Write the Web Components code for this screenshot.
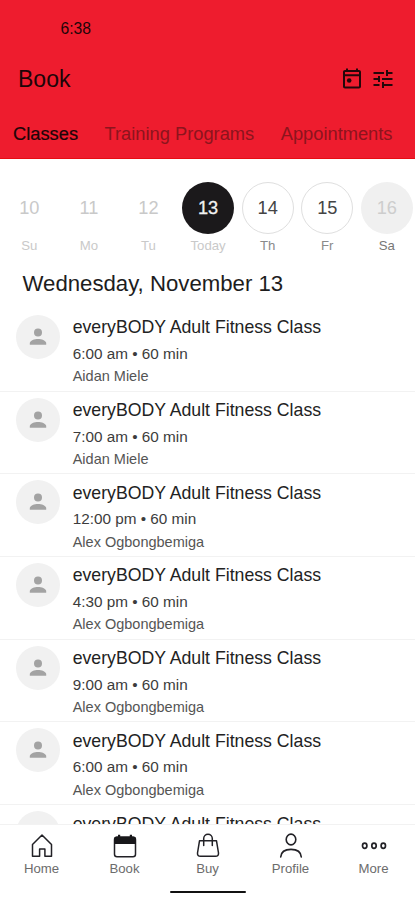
<!DOCTYPE html>
<html lang="en">
<head>
<meta charset="utf-8">
<meta name="viewport" content="width=device-width, initial-scale=1">
<title>Book</title>
<style>
html, body { margin: 0; height: 100%; overflow: hidden; background: #fff; }
body { font-family: "Liberation Sans", Arial, sans-serif; }
</style>
</head>
<body>
<booking-app></booking-app>
<script>
function define(name, template) {
  customElements.define(name, class extends HTMLElement {
    constructor() {
      super();
      this.attachShadow({ mode: 'open' });
    }
    connectedCallback() {
      this.shadowRoot.innerHTML = typeof template === 'function' ? template(this) : template;
    }
  });
}

const icons = {
  today: '<svg width="24" height="24" viewBox="0 0 24 24" fill="#23070a"><path d="M19 3h-1V1.500h-2V3H8V1.500H6V3H5c-1.110 0-2 .9-2 2v14.500c0 1.100.89 2 2 2h14c1.100 0 2-.9 2-2V5c0-1.100-.9-2-2-2zm0 16.500H5V9.200h14v10.300zm0-12.200H5V5h14v2.300z"/><circle cx="9.200" cy="13.500" r="2.300"/></svg>',
  tune: '<svg width="24" height="24" viewBox="0 0 24 24" fill="#23070a"><path d="M2.500 17v2h6v-2h-6zM2.500 5v2H13V5H2.500zM13 21v-2h8.500v-2H13v-2h-2v6h2zM7 9v2H2.500v2H7v2h2V9H7zm14.500 4v-2H11v2h10.500zM15 9h2V7h4.500V5H17V3h-2v6z"/></svg>',
  person: '<svg width="26" height="26" viewBox="0 0 26 26" fill="#a3a3a3"><circle cx="13" cy="8.500" r="4"/><path d="M4.800 20.700v-1.600c0-2.700 4.900-4.200 8.200-4.200s8.200 1.500 8.200 4.200v1.600z"/></svg>',
  home: '<svg width="28" height="28" viewBox="0 0 28 28" fill="none" stroke="#222126" stroke-width="1.500" stroke-linejoin="round"><path d="M4.500 12.500L14 3l9.500 9.500v11.800h-6.600v-7.300h-5.300v7.300H4.500z"/></svg>',
  book: '<svg width="28" height="28" viewBox="0 0 28 28"><rect x="3.500" y="5.200" width="21" height="19.500" rx="2.500" fill="#fff" stroke="#222126" stroke-width="1.500"/><path d="M3 12V7.500q0-3 3-3h1V2.800h2.200v1.700h9.600V2.800H21v1.700h1q3 0 3 3V12z" fill="#18171a"/></svg>',
  buy: '<svg width="28" height="28" viewBox="0 0 28 28" fill="none" stroke="#222126" stroke-width="1.500" stroke-linecap="round" stroke-linejoin="round"><path d="M5.500 8.800h17l2 12.200q.2 3.300-3 3.300h-15q-3.200 0-3-3.300zM9.700 13.500V6.500a4.300 4.300 0 0 1 8.600 0v7"/></svg>',
  profile: '<svg width="28" height="28" viewBox="0 0 28 28" fill="none" stroke="#222126" stroke-width="1.600" stroke-linecap="round"><ellipse cx="14" cy="7.500" rx="4.800" ry="5.400"/><path d="M3.700 25c.4-5 4.200-7.600 10.300-7.600S23.900 20 24.300 25"/></svg>',
  more: '<svg width="28" height="28" viewBox="0 0 28 28" fill="none" stroke="#222126" stroke-width="1.700"><ellipse cx="4.700" cy="13.800" rx="2.200" ry="2.600"/><ellipse cx="14" cy="13.800" rx="2.200" ry="2.600"/><ellipse cx="23.300" cy="13.800" rx="2.200" ry="2.600"/></svg>'
};

define('ui-icon', el => `
  <style>:host { display: block; flex: none; } svg { display: block; }</style>
  ${icons[el.getAttribute('name')]}`);

define('app-header', `
  <style>
    :host { display: block; box-sizing: border-box; flex: none; height: 159px; background: #ee1c2e; color: #1c0508; border-bottom: 1px solid #e60d12; }
    .status { padding: 20px 0 0 60.500px; font-size: 15.700px; line-height: 18px; }
    .bar { display: flex; align-items: center; height: 26px; padding: 28px 20px 0 18px; gap: 7px; }
    h1 { margin: 0; flex: 1; font-size: 23px; font-weight: 400; line-height: 26px; }
    .tabs { display: flex; gap: 26.500px; padding: 31px 0 0 13px; font-size: 18.300px; line-height: 21px; white-space: nowrap; }
  </style>
  <div class="status">6:38</div>
  <div class="bar"><h1>Book</h1><ui-icon name="today"></ui-icon><ui-icon name="tune"></ui-icon></div>
  <nav class="tabs"><slot></slot></nav>`);

define('app-tab', `
  <style>
    :host { display: block; color: #8c141d; }
    :host([active]) { color: #1c0508; -webkit-text-stroke: .2px #1c0508; }
  </style><slot></slot>`);

define('day-cell', el => `
  <style>
    :host { display: flex; flex-direction: column; align-items: center; width: 59.600px; flex: none; color: #c9c9c9; }
    .disc { box-sizing: border-box; width: 52px; height: 52px; border-radius: 50%; display: flex; align-items: center; justify-content: center; font-size: 18.200px; line-height: 20px; border: 1px solid transparent; }
    .name { margin-top: 4px; font-size: 13.200px; line-height: 16px; }
    :host([kind="today"]) .disc { background: #1b191b; color: #f2f2f2; -webkit-text-stroke: .3px #f2f2f2; }
    :host([kind="open"]) .disc { border-color: #dfdfdf; color: #444; }
    :host([kind="open"]) .name { color: #8a8a8a; }
    :host([kind="full"]) .disc { background: #f0f0f0; color: #cdcdcd; }
    :host([kind="full"]) .name { color: #777; }
  </style>
  <div class="disc">${el.getAttribute('date')}</div><div class="name"><slot></slot></div>`);

define('week-strip', `
  <style>:host { display: flex; flex: none; padding: 23px 0 0; margin-left: -.500px; }</style><slot></slot>`);

define('class-item', el => `
  <style>
    :host { display: flex; box-sizing: border-box; flex: none; height: 82.700px; padding: 6px 0 0 16px; gap: 12.700px; border-bottom: 1px solid #f2f2f2; white-space: nowrap; }
    .avatar { flex: none; width: 44px; height: 44px; border-radius: 50%; background: #f1f1f1; display: flex; align-items: center; justify-content: center; }
    .title { font-size: 17.700px; line-height: 20px; padding-top: 2.400px; color: #222; }
    .time { font-size: 15.300px; line-height: 18px; margin-top: 7.500px; color: #3c3c3c; }
    .coach { font-size: 14.500px; line-height: 17px; margin-top: 5.500px; color: #555; }
  </style>
  <div class="avatar"><ui-icon name="person"></ui-icon></div>
  <div>
    <div class="title">everyBODY Adult Fitness Class</div>
    ${el.hasAttribute('time') ? `<div class="time">${el.getAttribute('time')} • 60 min</div>
    <div class="coach">${el.getAttribute('coach')}</div>` : ''}
  </div>`);

define('class-list', `
  <style>
    :host { display: flex; flex-direction: column; flex: 1; min-height: 0; overflow: hidden; }
    h2 { margin: 0; flex: none; padding: 17px 0 13px 22.500px; font-size: 22.200px; line-height: 25px; font-weight: 400; color: #1d1d1d; }
  </style>
  <h2>Wednesday, November 13</h2><slot></slot>`);

define('nav-item', el => `
  <style>
    :host { display: flex; flex-direction: column; align-items: center; width: 83px; color: #6c6c6c; font-size: 13.200px; line-height: 15px; }
    ui-icon { margin-bottom: 1px; }
  </style><ui-icon name="${el.getAttribute('icon')}"></ui-icon><slot></slot>`);

define('bottom-nav', `
  <style>
    :host { display: block; box-sizing: border-box; flex: none; height: 76px; background: #fff; border-top: 1px solid #f2f2f2; }
    .items { display: flex; padding-top: 7px; }
    .bar { width: 76px; height: 2px; border-radius: 1px; margin: 15px auto 0; background: #111; }
  </style>
  <div class="items"><slot></slot></div><div class="bar"></div>`);

define('booking-app', `
  <style>:host { display: flex; flex-direction: column; width: 415px; height: 900px; overflow: hidden; background: #fff; }</style>
  <app-header><app-tab active>Classes</app-tab><app-tab>Training Programs</app-tab><app-tab>Appointments</app-tab></app-header>
  <week-strip>
    <day-cell date="10">Su</day-cell><day-cell date="11">Mo</day-cell><day-cell date="12">Tu</day-cell>
    <day-cell date="13" kind="today">Today</day-cell><day-cell date="14" kind="open">Th</day-cell>
    <day-cell date="15" kind="open">Fr</day-cell><day-cell date="16" kind="full">Sa</day-cell>
  </week-strip>
  <class-list>
    <class-item time="6:00 am" coach="Aidan Miele"></class-item>
    <class-item time="7:00 am" coach="Aidan Miele"></class-item>
    <class-item time="12:00 pm" coach="Alex Ogbongbemiga"></class-item>
    <class-item time="4:30 pm" coach="Alex Ogbongbemiga"></class-item>
    <class-item time="9:00 am" coach="Alex Ogbongbemiga"></class-item>
    <class-item time="6:00 am" coach="Alex Ogbongbemiga"></class-item>
    <class-item></class-item>
  </class-list>
  <bottom-nav>
    <nav-item icon="home">Home</nav-item><nav-item icon="book">Book</nav-item><nav-item icon="buy">Buy</nav-item>
    <nav-item icon="profile">Profile</nav-item><nav-item icon="more">More</nav-item>
  </bottom-nav>`);
</script>
</body>
</html>
